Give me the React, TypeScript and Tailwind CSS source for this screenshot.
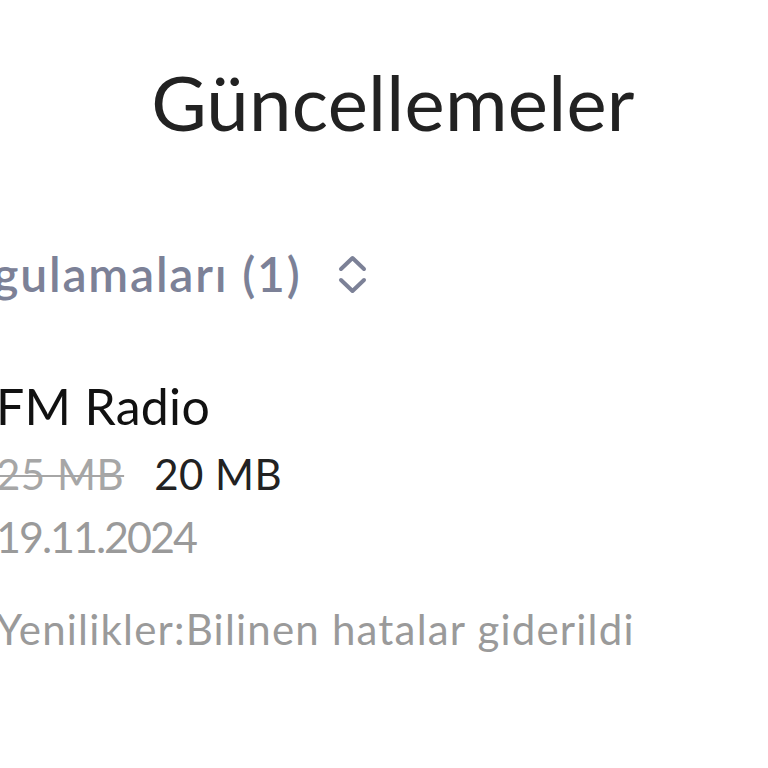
function SortToggle() {
  return (
    <svg width="29" height="39" viewBox="0 0 29 39" fill="none" className="text-[#7c8197]">
      <path d="M3 14 L14.5 3 L26 14" stroke="currentColor" strokeWidth="4" strokeLinecap="round" strokeLinejoin="round" />
      <path d="M3 25 L14.5 36 L26 25" stroke="currentColor" strokeWidth="4" strokeLinecap="round" strokeLinejoin="round" />
    </svg>
  );
}

export default function App() {
  return (
    <div className="w-[768px] h-[768px] overflow-hidden bg-white font-['Lato','Noto_Sans',sans-serif]">
      <h1 className="pt-[62px] pl-[18px] text-center text-[76px] leading-[80px] text-[#222222] tracking-[0.3px]">
        Güncellemeler
      </h1>
      <div className="-ml-[70px] mt-[104px] flex items-center gap-[36px]">
        <h2 className="text-[48px] leading-[56px] font-semibold text-[#7c8197] tracking-[1.8px]">
          Uygulamaları (1)
        </h2>
        <SortToggle />
      </div>
      <div className="-ml-[4px] mt-[74px] flex flex-col">
        <p className="text-[50px] leading-[60px] text-[#111111] tracking-[0.3px]">FM Radio</p>
        <div className="mt-[6px] flex items-baseline gap-[30px] text-[42px] leading-[64px] tracking-[0.5px]">
          <span className="text-[#a6a6a6] line-through decoration-[2px]">25 MB</span>
          <span className="text-[#222222]">20 MB</span>
        </div>
        <p className="text-[43px] leading-[62px] text-[#9a9a9a] tracking-[-2px]">19.11.2024</p>
        <p className="mt-[29px] text-[42px] leading-[64px] text-[#9a9a9a] tracking-[1.2px]">
          Yenilikler:Bilinen hatalar giderildi
        </p>
      </div>
    </div>
  );
}
